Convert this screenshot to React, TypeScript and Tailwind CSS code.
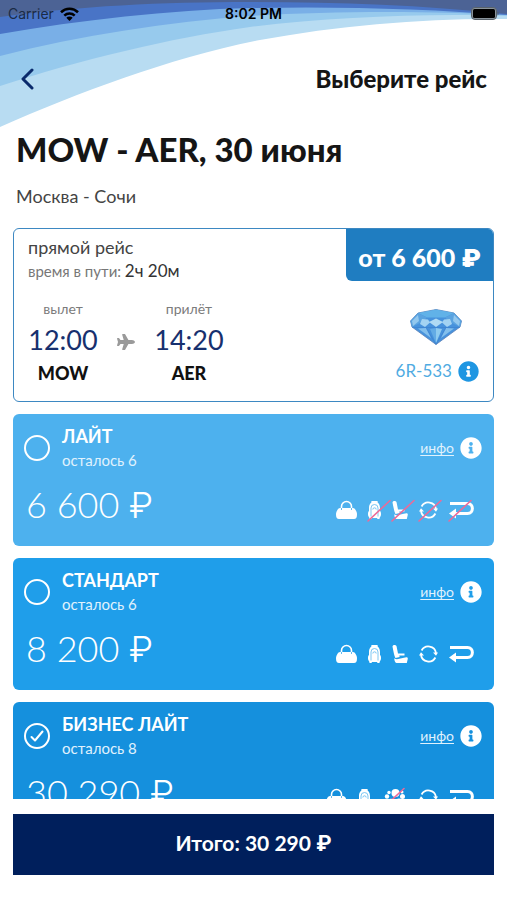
import { useState, type ReactNode } from "react";
import { FaInfoCircle, FaPlane } from "react-icons/fa";

type IconName = "bag" | "backpack" | "seat" | "seats" | "refresh" | "back";

type Service = { icon: IconName; off?: boolean };

type Tariff = {
  id: string;
  name: string;
  left: number;
  price: string;
  bg: string;
  services: Service[];
};

const tariffs: Tariff[] = [
  {
    id: "light",
    name: "ЛАЙТ",
    left: 6,
    price: "6 600 ₽",
    bg: "bg-[#4db1ee]",
    services: [
      { icon: "bag" },
      { icon: "backpack", off: true },
      { icon: "seat", off: true },
      { icon: "refresh", off: true },
      { icon: "back", off: true },
    ],
  },
  {
    id: "standard",
    name: "СТАНДАРТ",
    left: 6,
    price: "8 200 ₽",
    bg: "bg-[#1f9eea]",
    services: [
      { icon: "bag" },
      { icon: "backpack" },
      { icon: "seat" },
      { icon: "refresh" },
      { icon: "back" },
    ],
  },
  {
    id: "business-light",
    name: "БИЗНЕС ЛАЙТ",
    left: 8,
    price: "30 290 ₽",
    bg: "bg-[#1590dd]",
    services: [
      { icon: "bag" },
      { icon: "backpack" },
      { icon: "seats", off: true },
      { icon: "refresh" },
      { icon: "back" },
    ],
  },
];

const iconShapes: Record<IconName, { width: number; shape: ReactNode }> = {
  bag: {
    width: 21,
    shape: (
      <>
        <path d="M5.500 9V6.500a5 5 0 0 1 10 0V9" fill="none" stroke="currentColor" strokeWidth="1.600" />
        <path d="M4 8h13c2 0 4 3.500 4 6.500S20 19 18 19H3c-2 0-3-1.500-3-4.500S2 8 4 8z" />
        <path d="M5.500 8v2M15.500 8v2" stroke="#1f9eea" strokeWidth=".7" />
      </>
    ),
  },
  backpack: {
    width: 13,
    shape: (
      <>
        <path d="M4 3V1.600h5V3" fill="none" stroke="currentColor" strokeWidth="1.200" />
        <path d="M6.500 1.800c3.800 0 5.500 2.700 5.500 6.200V11c.8.8 1 1.500 1 3s-.3 2.200-1 3l-.6 2H9.500l-.5-1H4l-.5 1H1.600L1 17c-.7-.8-1-1.500-1-3s.2-2.200 1-3V8c0-3.500 1.700-6.200 5.500-6.200z" />
        <path d="M3 16.500V8a3.500 3.500 0 0 1 7 0v8.500M4.800 9.500a1.700 1.700 0 0 1 3.400 0" fill="none" stroke="#5bb9f0" strokeWidth=".8" />
      </>
    ),
  },
  seat: {
    width: 16,
    shape: (
      <>
        <path d="M.5 2.500C1 .6 4.200.6 4.600 2.600L6 9.600h6.500v1.900H7.200l.5 1.500-4.200 1C2.500 12.500 1.300 7 .5 2.500z" />
        <path d="M2.300 14.200c1.500 1.200 3 1.100 5 .6l7-1.600c1.400-.2 1.700.8 1.400 2L14.800 19H4.500C3 18.500 2.300 16.500 2.300 14.200z" />
      </>
    ),
  },
  seats: {
    width: 26,
    shape: (
      <>
        <circle cx="13.500" cy="5" r="4" />
        <circle cx="7" cy="4.500" r="1.700" />
        <circle cx="5" cy="8.500" r="2.200" />
        <circle cx="20.500" cy="8.500" r="2.500" />
        <circle cx="20" cy="4" r="1.500" />
        <circle cx="9" cy="13.500" r="2.800" />
        <circle cx="17" cy="14" r="3.500" />
      </>
    ),
  },
  refresh: {
    width: 19,
    shape: (
      <>
        <path d="M2.600 6.500A7.700 7.700 0 0 1 17 9" fill="none" stroke="currentColor" strokeWidth="1.800" />
        <path d="M16.400 13.500A7.700 7.700 0 0 1 2 11" fill="none" stroke="currentColor" strokeWidth="1.800" />
        <path d="M14 8.500h5l-2 3.200zM0 11.500h5L2 8.300z" />
      </>
    ),
  },
  back: {
    width: 25,
    shape: (
      <>
        <path d="M1 3.500h17.500c6.500 0 6.500 10 0 10H6" fill="none" stroke="currentColor" strokeWidth="3" />
        <path d="M0 13.500L7 8.500v10z" />
      </>
    ),
  },
};

function ServiceIcon({ icon, off }: Service) {
  const { width, shape } = iconShapes[icon];
  return (
    <svg width={width} height={20} viewBox={`0 0 ${width} 20`} fill="currentColor" className="overflow-visible">
      {shape}
      {off && <path d="M0 21L22 .5" stroke="#ec6a98" strokeWidth="1.600" strokeLinecap="round" />}
    </svg>
  );
}

function Waves() {
  return (
    <svg
      viewBox="0 0 507 130"
      preserveAspectRatio="none"
      className="pointer-events-none absolute inset-x-0 top-0 h-[130px] w-full"
    >
      <path d="M0 0H507V19C430 18 340 25 260 40C170 58 80 92 0 127Z" fill="#b8dcf2" />
      <path d="M0 0H507V16C430 13 330 17 250 27C170 38 80 60 0 86Z" fill="#97caed" />
      <path d="M0 0H507V15C430 11 330 11 250 16C170 22 80 35 0 56Z" fill="#79afe7" />
      <path d="M0 0H507V15C430 9 340 6 250 8C170 10 80 20 0 34Z" fill="#4974c6" />
      <path d="M0 0H507V14C420 5 340 2 250 2C160 2 80 6 0 17Z" fill="#4c6395" />
    </svg>
  );
}

function StatusBar() {
  return (
    <div className="grid h-7 grid-cols-3 items-center px-2 font-['Inter',sans-serif] text-sm text-[#1b2b45]">
      <div className="flex items-center gap-1.5">
        Carrier
        <svg width="19" height="14" viewBox="0 0 19 14" fill="none" stroke="#000" strokeWidth="2.600">
          <path d="M1 5.200a12.200 12.200 0 0 1 17 0" />
          <path d="M4.300 8.600a7.600 7.600 0 0 1 10.400 0" />
          <path d="M9.500 14L6.300 10.800a4.600 4.600 0 0 1 6.400 0z" fill="#000" stroke="none" />
        </svg>
      </div>
      <span className="text-center font-semibold text-black">8:02 PM</span>
      <svg width="28" height="14" viewBox="0 0 28 14" className="justify-self-end">
        <rect x=".5" y=".5" width="25" height="12" rx="3.500" fill="#8a949c" stroke="#59636b" />
        <rect x="2" y="2" width="22" height="9" rx="1.500" fill="#000" />
        <path d="M26.500 4.500c1.500.8 1.500 3.200 0 4z" fill="#59636b" />
      </svg>
    </div>
  );
}

function Diamond() {
  return (
    <svg width="52" height="36" viewBox="0 0 52 36" strokeLinejoin="round">
      <path d="M.5 12L8 4 26 .5 44 4l7.500 8-1.500 6-24 17.500L2 18z" fill="#4792dc" stroke="#5c82b8" strokeWidth=".8" />
      <path d="M8 4L26 .5 44 4l-9 4.500H17z" fill="#61b2e8" />
      <path d="M8 4l9 4.500-6 5L2 18 .5 12z" fill="#5aa3e0" />
      <path d="M44 4l-9 4.500 6 5 9 4.500 1.500-6z" fill="#5aa3e0" />
      <path d="M2 12l6-6 1 6-6 5z" fill="#93c8ee" />
      <path d="M50 12l-6-6-1 6 6 5z" fill="#93c8ee" />
      <path d="M12 10l6 .5 2 3-5 4.500-5-3z" fill="#a3d3f2" />
      <path d="M40 10l-6 .5-2 3 5 4.500 5-3z" fill="#a3d3f2" />
      <path d="M26 9.500l7 3.500-7 5-7-5z" fill="#b0dbf4" />
      <path d="M8 19.500l8-.5 5 10z" fill="#83bfec" />
      <path d="M44 19.500l-8-.5-5 10z" fill="#83bfec" />
      <path d="M26 19l6 1-6 14z" fill="#8fcbf0" />
      <path d="M26 19l-6 1 6 14z" fill="#63abe5" />
      <path d="M2 18.500h48M16 18.500l10 17 10-17" fill="none" stroke="#3d80cc" strokeWidth=".6" />
    </svg>
  );
}

function Leg({ label, time, code }: { label: string; time: string; code: string }) {
  return (
    <div className="flex w-[70px] flex-col items-center">
      <span className="text-sm leading-5 text-[#7b7b7b]">{label}</span>
      <time className="text-[27px] leading-[42px] text-[#17306e]">{time}</time>
      <strong className="text-lg leading-6 font-black text-[#111]">{code}</strong>
    </div>
  );
}

function FlightCard() {
  return (
    <section className="flex h-[174px] shrink-0 justify-between overflow-hidden rounded-md border border-[#3d88c2]">
      <div className="pt-1.5 pl-3.5">
        <p className="text-lg leading-6 text-[#444]">прямой рейс</p>
        <p className="text-[15px] leading-6 text-[#777]">
          время в пути: <span className="text-[17px] text-[#333]">2ч 20м</span>
        </p>
        <div className="mt-4 flex items-center gap-[19px]">
          <Leg label="вылет" time="12:00" code="MOW" />
          <FaPlane className="size-[18px] text-[#9a9a9a]" />
          <Leg label="прилёт" time="14:20" code="AER" />
        </div>
      </div>
      <div className="flex flex-col items-end">
        <p className="flex h-[52px] w-[147px] items-center justify-center rounded-bl-md bg-[#1f7dc1] pt-1.5 text-[25px] font-black text-white">
          от 6 600 ₽
        </p>
        <div className="mt-7 mr-[31px]">
          <Diamond />
        </div>
        <div className="mt-[14px] mr-3.5 flex items-center gap-1.5">
          <span className="text-[17px] leading-6 text-[#4fabe2]">6R-533</span>
          <button type="button" aria-label="О рейсе" className="text-[#1f96e2]">
            <FaInfoCircle className="size-[21px]" />
          </button>
        </div>
      </div>
    </section>
  );
}

function TariffCard({ tariff, checked, onSelect }: { tariff: Tariff; checked: boolean; onSelect: () => void }) {
  return (
    <section
      className={`flex h-[132px] shrink-0 flex-col justify-between rounded-md pt-2.5 pr-3 pb-[18px] pl-2.5 text-white ${tariff.bg}`}
    >
      <div className="flex items-center justify-between">
        <label className="flex items-center gap-[11px]">
          <span className="grid size-7 place-items-center">
            <input
              type="radio"
              name="tariff"
              value={tariff.id}
              checked={checked}
              onChange={onSelect}
              className="col-start-1 row-start-1 size-[26px] appearance-none rounded-full border-2 border-white"
            />
            {checked && (
              <svg
                width="14"
                height="12"
                viewBox="0 0 14 12"
                fill="none"
                stroke="currentColor"
                strokeWidth="2"
                strokeLinecap="round"
                strokeLinejoin="round"
                className="pointer-events-none col-start-1 row-start-1"
              >
                <path d="M1.500 7l3.500 3.500L12.500 1.500" />
              </svg>
            )}
          </span>
          <span className="flex flex-col">
            <span className="text-lg leading-6 font-bold">{tariff.name}</span>
            <span className="text-[15px] leading-6 text-[#e0f2fd]">осталось {tariff.left}</span>
          </span>
        </label>
        <div className="flex items-center gap-1.5">
          <a href="#info" className="text-sm text-[#e0f2fd] underline underline-offset-2">
            инфо
          </a>
          <button type="button" aria-label={`Информация: ${tariff.name}`}>
            <FaInfoCircle className="size-[22px]" />
          </button>
        </div>
      </div>
      <div className="flex items-center justify-between pr-2 pl-[3px]">
        <span className="text-4xl leading-12 font-light">{tariff.price}</span>
        <div className="mt-3 flex items-center gap-[11px]">
          {tariff.services.map((service) => (
            <ServiceIcon key={service.icon} {...service} />
          ))}
        </div>
      </div>
    </section>
  );
}

export default function App() {
  const [selected, setSelected] = useState("business-light");
  const total = tariffs.find((t) => t.id === selected)!.price;

  return (
    <main
      lang="ru"
      className="relative flex h-screen flex-col overflow-hidden bg-white font-['Lato','Inter',sans-serif] text-[#151515]"
    >
      <Waves />
      <header className="relative">
        <StatusBar />
        <div className="flex h-[102px] items-center justify-between px-5">
          <button type="button" aria-label="Назад">
            <svg
              width="16"
              height="22"
              viewBox="0 0 16 22"
              fill="none"
              stroke="#0a2a6c"
              strokeWidth="3"
              strokeLinecap="round"
              strokeLinejoin="round"
            >
              <path d="M12 2L3 11l9 9" />
            </svg>
          </button>
          <h2 className="text-2xl leading-7 font-black">Выберите рейс</h2>
        </div>
      </header>

      <div className="relative px-4">
        <h1 className="text-[33px] leading-[38px] font-black">MOW - AER, 30 июня</h1>
        <p className="mt-4 text-lg leading-6 text-[#444]">Москва - Сочи</p>
      </div>

      <div className="mt-5 flex min-h-0 flex-1 flex-col gap-3 overflow-hidden px-[13px]">
        <FlightCard />
        {tariffs.map((t) => (
          <TariffCard key={t.id} tariff={t} checked={t.id === selected} onSelect={() => setSelected(t.id)} />
        ))}
      </div>

      <footer className="px-[13px] pt-[15px] pb-[25px]">
        <button type="button" className="h-[61px] w-full bg-[#001f5c] pb-1 text-[21px] font-bold text-white">
          Итого: {total}
        </button>
      </footer>
    </main>
  );
}
